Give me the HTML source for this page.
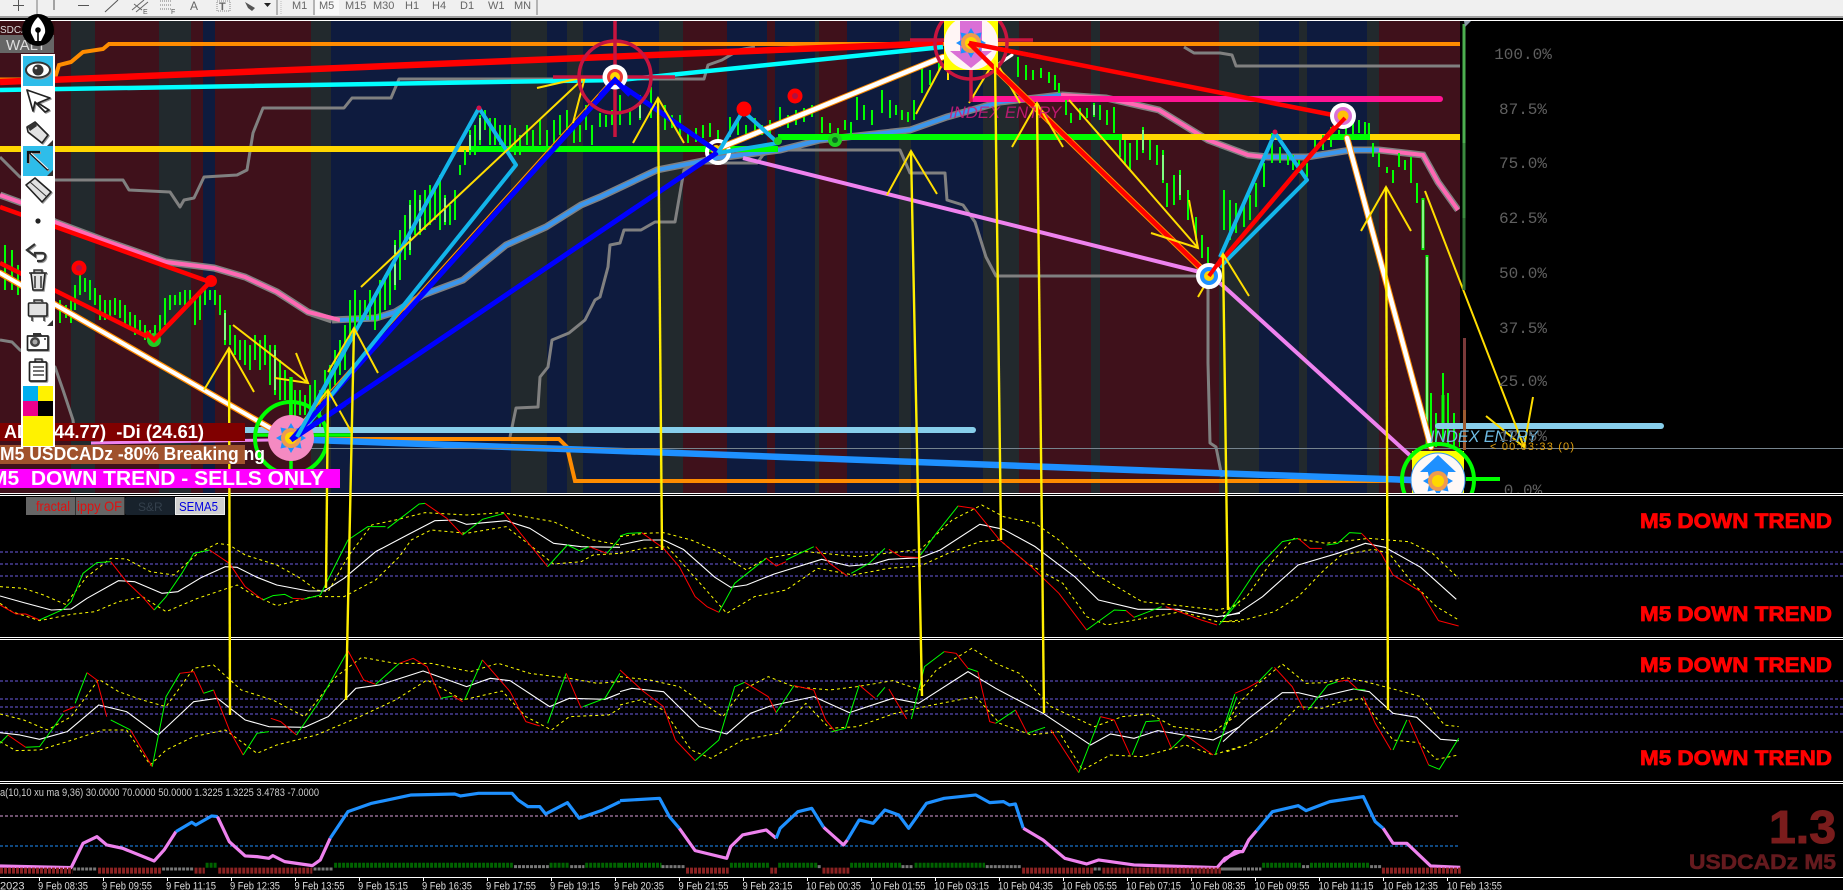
<!DOCTYPE html>
<html><head><meta charset="utf-8"><title>USDCADz M5</title>
<style>
html,body{margin:0;padding:0;background:#000;width:1843px;height:890px;overflow:hidden}
svg{position:absolute;left:0;top:0;display:block}
text{font-family:"Liberation Sans",sans-serif}
.n{fill:none;vector-effect:non-scaling-stroke;stroke-linejoin:round}
.r{stroke:#f00;stroke-width:1}.g{stroke:#0f0;stroke-width:1}.w{stroke:#fff;stroke-width:1.1}
.y{stroke:#ff0;stroke-width:1;stroke-dasharray:3 3}
.pk{stroke:#ee82ee;stroke-width:3.2}.bl{stroke:#1e90ff;stroke-width:3.2}
.hr{stroke:#8b2222;stroke-width:6;stroke-dasharray:3 1}
.hg{stroke:#777;stroke-width:3;stroke-dasharray:3 1}
.hn{stroke:#006400;stroke-width:5;stroke-dasharray:3 1}
.ar{fill:none;stroke:#ffdd00;stroke-width:2}
.ln{fill:none;stroke:#ffee00;stroke-width:2.4}
.tf{font-size:11px;fill:#666}
.tm{font-size:11px;fill:#ddd}
.pc{font-family:"Liberation Mono",monospace;font-size:16px;fill:#606060;text-anchor:middle}
.dt{font-size:21px;font-weight:bold;fill:#f00;stroke:#f00;stroke-width:.8}
.ic{fill:#fff;stroke:#222;stroke-width:1.7;stroke-linejoin:round}
.ig{fill:#e2e2e2;stroke:#222;stroke-width:1.6;stroke-linejoin:round}
.sh{filter:drop-shadow(1px 1px 0 #999)}
</style></head><body>
<svg width="1843" height="890" viewBox="0 0 1843 890" xmlns="http://www.w3.org/2000/svg">
<defs>
<clipPath id="mc"><rect x="0" y="21" width="1843" height="472"/></clipPath>
<clipPath id="mc2"><rect x="0" y="21" width="1460" height="472"/></clipPath>
<g id="sun">
<polygon points="0,-15 3.5,-9 10.5,-10.5 9,-3.5 15,0 9,3.5 10.5,10.5 3.5,9 0,15 -3.5,9 -10.5,10.5 -9,3.5 -15,0 -9,-3.5 -10.5,-10.5 -3.5,-9" fill="#1e90ff"/>
<circle r="10" fill="#ef9a50"/><circle r="6" fill="#ffd700"/>
</g>
</defs>
<rect width="1843" height="890" fill="#000"/>

<!-- MAIN -->
<g clip-path="url(#mc)">
<g shape-rendering="crispEdges">
<rect x="0" y="21" width="1460" height="472" fill="#3f111b"/>
<g fill="#22292d">
<rect x="71" y="21" width="24" height="472"/><rect x="159" y="21" width="32" height="472"/><rect x="311" y="21" width="20" height="472"/><rect x="511" y="21" width="36" height="472"/><rect x="567" y="21" width="16" height="472"/><rect x="659" y="21" width="24" height="472"/><rect x="815" y="21" width="4" height="472"/><rect x="899" y="21" width="12" height="472"/><rect x="983" y="21" width="36" height="472"/><rect x="1091" y="21" width="9" height="472"/><rect x="1219" y="21" width="40" height="472"/><rect x="1299" y="21" width="8" height="472"/><rect x="1367" y="21" width="12" height="472"/>
</g>
<g fill="#0e1b3e">
<rect x="203" y="21" width="12" height="472"/><rect x="331" y="21" width="180" height="472"/><rect x="547" y="21" width="20" height="472"/><rect x="583" y="21" width="76" height="472"/><rect x="727" y="21" width="40" height="472"/><rect x="775" y="21" width="40" height="472"/><rect x="847" y="21" width="52" height="472"/><rect x="911" y="21" width="72" height="472"/><rect x="1259" y="21" width="40" height="472"/><rect x="1307" y="21" width="60" height="472"/>
</g>
</g>
<g clip-path="url(#mc2)">
<!-- gray stepped lines -->
<g fill="none" stroke="#808080" stroke-width="3" stroke-linejoin="round">
<polyline points="0,157 20,177 55,180 123,180 129,190 170,192 180,207 184,200 194,198 204,177 237,175 247,170 253,133 263,108 344,108 352,98 391,98 399,79 704,79 708,65 722,60 739,50 755,47"/>
<polyline points="0,340 12,342 20,350 55,367 63,390 73,420 75,437"/>
<polyline points="510,437 516,408 538,407 540,377 548,367 552,340 569,333 585,320 595,300 600,297 608,267 610,245 620,243 624,230 641,230 655,222 675,222 684,170 700,163 757,163 763,155 775,150 900,150 910,173 945,173 947,200 963,205 975,222 986,257 996,276 1198,276 1208,287 1208,363 1210,443 1216,447 1222,477"/>
<polyline points="1184,47 1194,53 1220,53 1232,55 1236,66 1460,66"/>
</g>
<!-- orange -->
<polyline points="55,78 59,65 71,62 83,52 103,49 109,44 1460,44" fill="none" stroke="#ff8c00" stroke-width="4"/>
<line x1="0" y1="79" x2="56" y2="79" stroke="#ff8c00" stroke-width="3"/>
<polyline points="316,439 559,439 567,447 575,481 1387,481" fill="none" stroke="#ff8c00" stroke-width="4"/>
<!-- MA thick -->
<polyline points="0,195 22,203 55,222 103,240 166,262 214,268 245,277 277,292 308,312 332,320" fill="none" stroke="#808080" stroke-width="7"/>
<polyline points="332,320 376,318 395,312 423,295 463,280 506,245 546,227 581,205 600,197 657,170 718,158 780,150 820,140 910,130 947,117 1000,102 1061,95" fill="none" stroke="#808080" stroke-width="7"/>
<polyline points="1061,95 1106,98 1159,110 1208,140 1248,155 1268,157 1307,157 1351,150 1379,150 1423,155 1438,182 1458,210" fill="none" stroke="#808080" stroke-width="7"/>
<polyline points="0,195 22,203 55,222 103,240 166,262 214,268 245,277 277,292 308,312 340,320" fill="none" stroke="#ff69b4" stroke-width="4"/>
<polyline points="340,320 376,318 395,312 423,295 463,280 506,245 546,227 581,205 600,197 657,170 718,158 780,150 820,140 910,130 947,117 1000,102 1061,95" fill="none" stroke="#3a96ee" stroke-width="4"/>
<polyline points="1061,95 1106,98 1159,110 1208,140 1248,155 1265,157" fill="none" stroke="#ff69b4" stroke-width="4"/>
<polyline points="1265,157 1307,157 1351,150 1379,150" fill="none" stroke="#3a96ee" stroke-width="4"/>
<polyline points="1379,150 1423,155 1438,182 1458,210" fill="none" stroke="#ff69b4" stroke-width="4"/>
<!-- horizontal levels -->
<line x1="0" y1="149" x2="470" y2="149" stroke="#ffd700" stroke-width="6"/>
<line x1="470" y1="149" x2="778" y2="149" stroke="#0f0" stroke-width="6"/>
<line x1="778" y1="137" x2="1122" y2="137" stroke="#0f0" stroke-width="6"/>
<line x1="1122" y1="137" x2="1462" y2="137" stroke="#ffd700" stroke-width="6"/>
<line x1="1332" y1="137" x2="1370" y2="137" stroke="#0f0" stroke-width="6"/>
<line x1="973" y1="99" x2="1440" y2="99" stroke="#ff1493" stroke-width="6" stroke-linecap="round"/>
<!-- candles -->
<path fill="none" stroke="#00ff00" stroke-width="2" d="M5 245V290M12 250V290M18 265V295M60 300V323M66 305V318M71 300V323M75 285V310M80 275V295M85 278V292M90 280V300M95 288V305M100 295V320M105 300V320M110 300V318M115 298V315M120 300V318M125 305V325M130 312V330M135 315V335M140 320V335M145 325V340M150 330V340M155 325V345M160 315V335M165 298V325M170 295V310M175 295V305M180 292V305M185 290V305M190 290V302M195 295V325M200 290V320M205 288V305M210 290V300M215 290V305M220 295V315M225 310V345M230 325V345M235 335V355M240 340V360M245 340V365M250 345V370M255 335V360M260 340V370M265 335V365M270 345V385M275 345V395M280 360V400M285 370V400M290 380V420M295 390V420M300 390V415M305 395V415M310 385V415M315 380V410M320 390V430M325 370V400M330 365V390M335 350V385M340 340V375M345 325V370M350 300V340M355 290V330M360 300V325M365 300V320M370 290V320M375 295V330M380 280V320M385 275V310M390 270V305M395 240V290M400 230V280M405 215V260M410 200V255M415 190V235M420 195V235M425 190V230M430 185V225M435 190V220M440 175V230M445 195V225M450 205V225M455 190V220M460 165V175M465 150V165M470 130V155M475 125V155M480 115V145M485 110V130M490 118V145M495 118V145M500 125V145M505 125V150M510 125V150M515 128V155M520 135V155M527 125V145M533 130V150M540 120V145M547 130V148M554 120V143M560 115V135M567 110V130M574 125V143M580 125V142M586 105V130M592 125V145M600 113V127M606 115V127M612 110V125M620 95V125M630 108V125M640 95V120M651 87V118M658 100V125M665 105V130M672 115V128M680 115V135M688 133V143M696 128V142M703 125V138M710 123V137M718 130V140M730 117V137M738 120V135M746 125V135M755 118V137M762 125V135M770 120V135M780 107V127M788 115V128M796 110V125M804 108V122M812 105V117M822 117V133M830 123V133M838 128V138M845 120V130M851 122V135M857 97V120M864 105V120M872 110V125M882 90V113M890 100V118M896 105V115M902 110V120M908 112V122M914 100V120M922 67V93M930 70V85M939 63V70M1018 57V77M1026 65V80M1033 70V80M1041 68V78M1049 72V83M1055 75V90M1059 83V93M1066 100V115M1071 113V123M1080 108V120M1087 108V118M1094 103V117M1100 105V120M1107 110V125M1114 107V133M1120 137V157M1125 140V165M1130 143V170M1137 140V160M1143 127V153M1150 140V160M1157 145V165M1163 150V183M1167 183V207M1174 175V205M1180 170V200M1188 190V220M1196 217V240M1202 235V258M1208 247V263M1224 190V230M1230 200V240M1236 203V233M1244 200V227M1250 195V220M1256 183V207M1264 163V187M1272 133V163M1280 147V163M1288 150V165M1293 155V170M1299 160V173M1307 163V177M1315 140V153M1323 135V150M1331 127V147M1339 130V140M1346 128V142M1353 122V135M1359 120V133M1365 122V135M1369 123V140M1373 143V157M1379 153V167M1387 167V173M1393 170V183M1399 153V167M1405 160V170M1411 157V183M1417 183V203M1423 198V250M1431 393V443M1436 413V447M1443 373V440M1448 393V447M1454 413V447M1460 433V447"/>
<path fill="none" stroke="#00ff00" stroke-width="3" d="M1427 255V447M1423 198V250M1443 395V425"/>
<path fill="none" stroke="#fff" stroke-width="1" d="M1427 257V445M1423 200V248M1163 155V180M1180 175V195M1143 130V150M1094 105V115M640 98V118M480 118V140M445 198V222M470 135V150M225 313V340M275 350V390M290 385V410M410 205V250M420 200V230M395 245V285"/>
</g>
<!-- bottom level lines -->
<line x1="245" y1="430" x2="973" y2="430" stroke="#87ceeb" stroke-width="6" stroke-linecap="round"/>
<line x1="1438" y1="426" x2="1661" y2="426" stroke="#87ceeb" stroke-width="6" stroke-linecap="round"/>
<polyline points="312,440 620,451 1240,474 1411,480" fill="none" stroke="#1e90ff" stroke-width="6.5"/>
<line x1="300" y1="448.5" x2="1843" y2="448.5" stroke="#76848e" stroke-width="1"/>
<polyline points="91,443 269,440" fill="none" stroke="#ee82ee" stroke-width="3"/>
<!-- trend lines top -->
<line x1="0" y1="82" x2="943" y2="43" stroke="#f00" stroke-width="6.5"/>
<polyline points="0,90 620,80 943,47" fill="none" stroke="#0ff" stroke-width="4.5"/>
<!-- violet -->
<polyline points="743,158 1204,273" fill="none" stroke="#ee82ee" stroke-width="4"/>
<polyline points="1220,283 1415,460" fill="none" stroke="#ee82ee" stroke-width="4"/>
<!-- ring behind -->
<circle cx="718" cy="152" r="11" fill="none" stroke="#fff" stroke-width="4"/>
<circle cx="716" cy="150" r="5" fill="#ffd700"/>
<!-- white/orange lines -->
<g fill="none" stroke-linecap="round">
<line x1="0" y1="273" x2="277" y2="432" stroke="#ff8c00" stroke-width="6.5"/><line x1="0" y1="273" x2="277" y2="432" stroke="#fff" stroke-width="4"/>
<line x1="722" y1="147" x2="943" y2="57" stroke="#ff8c00" stroke-width="6.5"/><line x1="722" y1="147" x2="943" y2="57" stroke="#fff" stroke-width="4.5"/>
<line x1="1347" y1="138" x2="1431" y2="447" stroke="#ff8c00" stroke-width="6.5"/><line x1="1347" y1="138" x2="1431" y2="447" stroke="#fff" stroke-width="4.5"/>
<line x1="1000" y1="63" x2="1012" y2="55" stroke="#fff" stroke-width="3"/>
</g>
<!-- blue triangle -->
<line x1="287" y1="439" x2="611" y2="80" stroke="#ff8c00" stroke-width="1.2"/>
<polyline points="291,440 615,81 718,152 291,440" fill="none" stroke="#0000ff" stroke-width="5" stroke-linejoin="round"/>
<!-- sky triangles -->
<g fill="none" stroke="#13b5ea" stroke-width="4" stroke-linejoin="round">
<polyline points="297,437 479,108 516,165 297,438"/>
<polyline points="718,153 743,111 778,143 718,153"/>
<polyline points="1220,257 1275,133 1307,180 1220,267"/>
</g>
<!-- red swings -->
<g fill="none" stroke="#f00" stroke-linejoin="round">
<polyline points="0,207 210,282" stroke-width="4.5"/>
<polyline points="0,263 154,340 210,282" stroke-width="4.5"/>
<line x1="969" y1="43" x2="1210" y2="277" stroke="#ff8c00" stroke-width="6.5"/>
<polyline points="969,43 1210,277" stroke-width="4.5"/>
<polyline points="969,43 1343,117 1212,272" stroke-width="4.5"/>
</g>
<!-- dots -->
<circle cx="211" cy="281" r="6" fill="#f00"/>
<circle cx="154" cy="340" r="7" fill="#22cc22"/>
<polyline points="146,332 154,340 210,282" fill="none" stroke="#f00" stroke-width="4.5"/>
<circle cx="79" cy="268" r="7.5" fill="#f00"/><circle cx="79" cy="268" r="3" fill="#b01040"/>
<circle cx="744" cy="109" r="7.5" fill="#f00"/>
<circle cx="795" cy="96" r="7.5" fill="#f00"/><circle cx="795" cy="96" r="3" fill="#b01040"/>
<circle cx="835" cy="140" r="7" fill="#1fcf1f"/><circle cx="835" cy="140" r="3" fill="#0a6b20"/>
<circle cx="778" cy="141" r="4" fill="#1fcf1f"/>
<circle cx="479" cy="108" r="2.5" fill="#d0104a"/>
<circle cx="1275" cy="132" r="2.5" fill="#d0104a"/>
<!-- arrows -->
<g class="ar">
<path class="ar" d="M361 287L585 77M537 88L585 77L573 123"/>
<path class="ar" d="M233 325L308 383M275 378L308 383L296 353"/>
<path class="ar" d="M1069 100L1198 248M1151 233L1198 248L1189 200"/>
<path class="ar" d="M1425 191L1524 447M1486 416L1524 447L1533 397"/>
<path class="ar" d="M916 114L942 65M948 70V80"/>
<path class="ar" d="M204 390L229 348L254 392"/>
<path class="ar" d="M304 420L328 390L352 433"/>
<path class="ar" d="M328 372L354 328L378 373"/>
<path class="ar" d="M633 143L658 98L684 143"/>
<path class="ar" d="M887 195L911 151L937 194"/>
<path class="ar" d="M969 103L995 60L1020 103"/>
<path class="ar" d="M1012 147L1037 103L1063 147"/>
<path class="ar" d="M1198 297L1223 254L1249 296"/>
<path class="ar" d="M1361 231L1386 187L1411 231"/>
</g>
<!-- targets -->
<g fill="none" stroke="#c8143f" stroke-width="3.5">
<circle cx="615" cy="77" r="36"/>
<path d="M615 21V137M553 77H675"/>
<circle cx="971" cy="43" r="36"/>
<path d="M971 70V102M910 40H1033"/>
</g>
<circle cx="615" cy="77" r="12.5" fill="#fff"/><circle cx="615" cy="77" r="8" fill="#e53935"/><circle cx="615" cy="77" r="5" fill="#ffd700"/>
<polyline points="600,96 615,80 630,95" fill="none" stroke="#0000ff" stroke-width="5"/>
<!-- top big icon -->
<rect x="944" y="21" width="54" height="49" fill="#ffff00"/>
<ellipse cx="971" cy="43" rx="27" ry="27" fill="#fff5f5"/>
<path d="M960 21H982V51H992L971 68L950 51H960Z" fill="#da70d6"/>
<use href="#sun" x="971" y="43"/>
<polyline points="969,43 1030,103" fill="none" stroke="#f00" stroke-width="4.5"/>
<polyline points="969,43 1040,57" fill="none" stroke="#f00" stroke-width="4.5"/>
<!-- small rings -->
<circle cx="1209" cy="276" r="11" fill="#1e90ff" stroke="#fff" stroke-width="4"/>
<circle cx="1209" cy="276" r="5" fill="#ffd700"/>
<polyline points="1209,276 1222,258" fill="none" stroke="#f00" stroke-width="4"/>
<ellipse cx="1343" cy="116" rx="13" ry="13" fill="#fff"/><circle cx="1343" cy="116" r="9" fill="#da70d6"/><circle cx="1343" cy="116" r="5.5" fill="#ffc107"/>
<polyline points="1345,118 1310,155" fill="none" stroke="#f00" stroke-width="4"/>
<!-- bottom left -->
<path d="M291 377V490M255 435H352" fill="none" stroke="#0f0" stroke-width="3.5"/>
<circle cx="291" cy="438" r="36" fill="none" stroke="#0f0" stroke-width="4"/>
<circle cx="291" cy="438" r="23" fill="#f48ac2"/>
<use href="#sun" x="291" y="438"/>
<polyline points="291,440 330,397" fill="none" stroke="#0000ff" stroke-width="5"/>
<polyline points="291,440 345,404" fill="none" stroke="#0000ff" stroke-width="5"/>
<polyline points="297,437 350,340" fill="none" stroke="#13b5ea" stroke-width="4"/>
<!-- bottom right -->
<rect x="1412" y="451" width="52" height="42" fill="#ffff00"/>
<circle cx="1438" cy="480" r="36" fill="none" stroke="#0f0" stroke-width="4"/>
<line x1="1466" y1="479" x2="1500" y2="479" stroke="#0f0" stroke-width="4"/>
<circle cx="1438" cy="480" r="27" fill="#fff8f6" stroke="#3a96ee" stroke-width="1"/>
<path d="M1438 455L1456 472H1446V478H1430V472H1420Z" fill="#1e90ff"/>
<use href="#sun" x="1438" y="481"/>
<!-- side bar -->
<rect x="1462.5" y="24" width="3" height="119" fill="#4caf50"/>
<rect x="1462.5" y="143" width="3" height="75" fill="#3b8a3f"/>
<rect x="1462.5" y="218" width="3" height="72" fill="#2f6e33"/>
<rect x="1463" y="338" width="3" height="72" fill="#7a3a3a"/>
<rect x="1463" y="410" width="3" height="40" fill="#9c5a30"/>
<polygon points="1464,21 1471,21 1465,27" fill="#8a98a5"/>
<!-- labels -->
<text x="949" y="118" font-size="17" font-style="italic" fill="#d21a7c" fill-opacity=".85" textLength="112" lengthAdjust="spacingAndGlyphs">INDEX ENTRY</text>
<text x="1430" y="442" font-size="17" font-style="italic" fill="#6fbde6" textLength="108" lengthAdjust="spacingAndGlyphs">INDEX ENTRY</text>
<text x="1490" y="450" font-size="11" fill="#e0a010" textLength="84">&lt; 00:03:33 (0)</text>
</g>
<!-- price scale -->
<text class="pc" x="1523" y="59">100.0%</text>
<text class="pc" x="1523" y="114">87.5%</text>
<text class="pc" x="1523" y="168">75.0%</text>
<text class="pc" x="1523" y="223">62.5%</text>
<text class="pc" x="1523" y="278">50.0%</text>
<text class="pc" x="1523" y="333">37.5%</text>
<text class="pc" x="1523" y="386">25.0%</text>
<text class="pc" x="1523" y="441">12.5%</text>
<text class="pc" x="1523" y="495" clip-path="url(#mc)">0.0%</text>

<!-- separators -->
<g fill="#fff">
<rect x="0" y="493" width="1843" height="1"/><rect x="0" y="495" width="1843" height="1"/>
<rect x="0" y="637" width="1843" height="1"/><rect x="0" y="639" width="1843" height="1"/>
<rect x="0" y="781" width="1843" height="1"/><rect x="0" y="783" width="1843" height="1"/>
<rect x="0" y="877" width="1843" height="1"/>
</g>
<!-- dashed levels -->
<g stroke="#6d5de0" stroke-width="1" stroke-dasharray="3 2">
<line x1="0" x2="1843" y1="552" y2="552"/><line x1="0" x2="1843" y1="564" y2="564"/><line x1="0" x2="1843" y1="576" y2="576"/>
<line x1="0" x2="1843" y1="681" y2="681"/><line x1="0" x2="1843" y1="699" y2="699"/><line x1="0" x2="1843" y1="707" y2="707"/><line x1="0" x2="1843" y1="714" y2="714"/><line x1="0" x2="1843" y1="732" y2="732"/>
</g>
<line x1="0" x2="1460" y1="816" y2="816" stroke="#dda0dd" stroke-dasharray="3 2"/>
<line x1="0" x2="1460" y1="846" y2="846" stroke="#1e90ff" stroke-dasharray="3 2"/>

<!-- indicators Z4 -->
<g transform="translate(0,490) scale(.3954 .3333)">
<polyline class="n y" points="0,290 60,295 110,315 165,343 220,260 280,205 320,207 380,245 440,255 500,190 550,160 580,165 620,195 700,225 760,265 800,300 830,305 880,200 940,105 1000,90 1075,68 1180,75 1270,68 1400,95 1500,150 1568,165"/>
<polyline class="n y" points="0,340 30,365 100,392 180,373 240,365 300,335 360,320 420,365 500,325 600,285 640,315 700,347 790,320 870,320 950,270 1010,200 1040,150 1090,120 1180,130 1280,110 1340,165 1400,222 1470,215 1500,195 1568,190"/>
<polyline class="n w" points="0,318 60,338 130,360 180,357 220,325 300,272 340,275 410,310 450,305 510,262 570,230 600,232 650,262 700,285 780,303 820,303 870,265 950,185 1030,135 1100,92 1150,90 1180,103 1280,92 1340,115 1400,160 1470,170 1568,172"/>
<polyline class="n r" points="0,345 40,372 65,372 100,390"/><polyline class="n g" points="100,390 160,358 180,335 210,250 245,218 280,215"/><polyline class="n r" points="280,215 320,275 360,320 390,360"/><polyline class="n g" points="390,360 420,320 460,250 490,190 530,180"/><polyline class="n r" points="530,180 580,220 620,290 665,330"/><polyline class="n g" points="665,330 690,317 720,313 740,325"/><polyline class="n r" points="740,325 770,327"/><polyline class="n g" points="770,327 810,315 880,150 930,110 975,110"/><polyline class="n g" points="980,115 1060,42 1075,40"/><polyline class="n r" points="1075,40 1130,85 1170,135"/><polyline class="n g" points="1170,135 1220,88 1275,70"/><polyline class="n r" points="1275,70 1330,150 1385,230"/><polyline class="n g" points="1385,230 1435,165 1465,182 1490,170"/><polyline class="n r" points="1490,170 1535,190"/><polyline class="n g" points="1535,190 1568,145"/>
<polyline class="n y" points="0,672 60,690 120,720 180,680 250,568 300,605 360,630 420,650 490,535 540,525 610,600 690,630 770,680 850,560 915,502 1000,520 1090,520 1190,545 1260,520 1340,550 1440,565 1510,580 1568,575"/>
<polyline class="n y" points="0,755 40,782 100,780 170,755 260,720 320,720 380,825 420,780 490,740 570,720 650,790 700,765 800,735 910,680 1000,630 1080,570 1170,630 1270,603 1330,680 1395,720 1440,680 1540,675 1568,655"/>
<polyline class="n w" points="0,728 50,735 100,748 170,725 250,645 320,665 400,735 490,635 550,625 620,690 680,710 770,712 830,680 900,595 960,585 1070,543 1180,590 1240,565 1290,572 1390,650 1440,625 1530,628 1568,610"/>
<polyline class="n g" points="0,760 20,735"/><polyline class="n r" points="20,735 65,772"/><polyline class="n g" points="65,772 100,770 160,672"/><polyline class="n r" points="160,665 190,650"/><polyline class="n g" points="190,640 220,548"/><polyline class="n r" points="220,548 245,570 270,680"/><polyline class="n g" points="280,690 330,720"/><polyline class="n r" points="330,720 385,830"/><polyline class="n g" points="385,830 420,620 455,550"/><polyline class="n r" points="455,550 490,545 515,610"/><polyline class="n g" points="515,610 540,600"/><polyline class="n r" points="540,600 580,720 615,795"/><polyline class="n g" points="615,795 650,730 680,725"/><polyline class="n r" points="685,685 710,695 750,735"/><polyline class="n g" points="750,735 810,630 880,482"/><polyline class="n r" points="880,482 920,570 950,583"/><polyline class="n g" points="950,583 1010,520"/><polyline class="n r" points="1010,520 1045,505 1080,530 1115,625"/><polyline class="n g" points="1115,625 1145,618"/><polyline class="n r" points="1145,618 1170,635"/><polyline class="n g" points="1175,630 1220,510"/><polyline class="n r" points="1220,510 1290,605 1330,695 1365,708"/><polyline class="n g" points="1385,700 1432,550"/><polyline class="n r" points="1432,550 1470,655"/><polyline class="n g" points="1475,650 1530,625 1568,550"/>
<polyline class="n pk" points="0,1128 180,1133 210,1060 245,1040 270,1065 310,1075 390,1113 415,1080 445,1025"/><polyline class="n bl" points="445,1025 485,997 495,1005 535,978 550,980"/><polyline class="n pk" points="550,980 580,1055 620,1098 650,1100 680,1105 690,1097 720,1115 790,1127 810,1110 835,1045"/><polyline class="n bl" points="835,1045 880,965 940,940 1040,915 1150,912 1165,918 1210,910 1295,910 1310,930 1335,950 1365,950 1380,972 1435,938 1465,985 1525,960 1568,935"/>
<path class="n hr" d="M0 1142H183M248 1142H408M492 1142H518M552 1142H790"/>
<path class="n hg" d="M185 1137H245M410 1137H490M793 1137H842M1300 1130H1388M1442 1130H1478"/>
<path class="n hn" d="M520 1126H550M845 1126H1297M1390 1126H1440M1480 1126H1568"/>
</g>
<!-- Z5 -->
<g transform="translate(620,490) scale(.3954 .3333)">
<polyline class="n y" points="0,140 60,130 110,128 180,150 240,180 320,240 370,205 470,185 600,200 760,178 840,90 915,45 970,80 1050,100 1110,150 1200,250 1320,335 1400,345 1510,360 1568,345"/>
<polyline class="n y" points="0,190 60,175 120,170 180,250 270,370 340,320 420,300 500,235 590,255 680,235 760,228 830,190 910,155 960,150 1030,220 1120,280 1180,380 1230,405 1350,380 1420,365 1510,395 1568,395"/>
<polyline class="n w" points="0,165 60,150 110,150 160,178 240,262 280,292 320,285 390,252 510,208 580,228 640,222 680,208 760,203 810,180 910,103 970,118 1050,170 1150,260 1210,330 1310,358 1410,358 1510,380 1568,370"/>
<polyline class="n g" points="0,138 20,130 55,128"/><polyline class="n r" points="55,128 110,175 150,230 190,320 220,350 250,367"/><polyline class="n g" points="250,367 290,280 370,205"/><polyline class="n r" points="370,205 395,228 420,215"/><polyline class="n g" points="420,210 490,170"/><polyline class="n r" points="495,170 530,220 575,258"/><polyline class="n g" points="585,250 630,220 670,175"/><polyline class="n r" points="680,178 710,200 760,203"/><polyline class="n g" points="760,195 800,130 855,48"/><polyline class="n r" points="855,48 895,55 960,150 1040,230 1110,310 1180,420"/><polyline class="n g" points="1180,420 1250,360 1280,362"/><polyline class="n r" points="1280,362 1300,382"/><polyline class="n g" points="1300,382 1370,350"/><polyline class="n r" points="1380,350 1470,390 1510,405"/><polyline class="n g" points="1515,405 1568,330"/>
<polyline class="n y" points="0,560 75,570 150,590 210,640 260,680 310,600 375,560 440,590 530,600 600,590 690,572 760,600 800,540 890,475 950,520 1010,550 1090,650 1200,710 1270,680 1340,672 1400,710 1500,725 1568,670"/>
<polyline class="n y" points="0,645 50,630 110,660 180,780 230,805 310,750 400,730 470,640 530,715 600,710 690,672 790,645 900,620 960,700 1040,735 1110,725 1170,840 1240,795 1320,800 1430,765 1500,795 1568,770"/>
<polyline class="n w" points="0,605 30,595 110,605 200,710 270,732 330,670 380,648 490,620 580,668 690,625 755,640 880,545 950,595 1070,670 1190,765 1240,732 1300,745 1360,722 1500,750 1568,710"/>
<polyline class="n r" points="0,540 60,605 110,650 140,750 190,812"/><polyline class="n g" points="190,812 250,750 290,590 315,577"/><polyline class="n r" points="315,577 375,620 395,668"/><polyline class="n g" points="395,668 440,587"/><polyline class="n r" points="440,587 490,600 520,690 545,725"/><polyline class="n g" points="535,725 570,715 605,585"/><polyline class="n r" points="605,585 645,625"/><polyline class="n g" points="650,620 670,592"/><polyline class="n r" points="680,597 725,687"/><polyline class="n g" points="737,687 770,530 820,485"/><polyline class="n r" points="820,485 850,490 880,535"/><polyline class="n g" points="880,535 905,545"/><polyline class="n r" points="905,545 935,695 950,700"/><polyline class="n g" points="950,700 1000,660"/><polyline class="n r" points="1000,660 1030,730"/><polyline class="n g" points="1030,730 1075,712"/><polyline class="n r" points="1090,720 1160,848"/><polyline class="n g" points="1160,848 1215,680"/><polyline class="n r" points="1215,680 1250,690 1290,795"/><polyline class="n g" points="1295,795 1330,695 1365,692"/><polyline class="n r" points="1365,692 1395,775"/><polyline class="n g" points="1395,775 1430,735"/><polyline class="n r" points="1430,735 1500,795"/><polyline class="n g" points="1505,795 1560,620"/>
<polyline class="n bl" points="0,932 100,925 125,980 150,1015"/><polyline class="n pk" points="150,1015 190,1082 270,1105 280,1070 310,1035 370,1020 395,1045"/><polyline class="n bl" points="395,1045 405,1015 450,965 485,955 515,1012"/><polyline class="n pk" points="515,1012 565,1065 575,1050"/><polyline class="n bl" points="575,1050 605,990 640,1000 670,960 705,975 730,1015 775,940 820,925 900,915 935,938 970,935 985,945 1000,942 1020,1015"/><polyline class="n pk" points="1020,1015 1070,1050 1125,1105 1180,1122 1210,1110 1300,1125 1510,1133 1530,1105 1568,1085"/>
<path class="n hr" d="M167 1142H275M380 1142H397M512 1142H580M1017 1142H1197M1220 1142H1520"/>
<path class="n hg" d="M105 1130H165M500 1130H510M712 1130H742M925 1130H1015M1198 1137H1218M1520 1137H1568"/>
<path class="n hn" d="M0 1126H105M278 1126H378M400 1126H500M582 1126H712M745 1126H923"/>
</g>
<!-- Z6 -->
<g transform="translate(1223,490) scale(.3954 .3333)">
<polyline class="n y" points="0,370 60,320 120,220 180,145 260,160 370,145 470,155 530,190 596,265"/>
<polyline class="n y" points="0,395 60,388 130,365 190,320 260,235 300,195 380,178 420,190 480,280 540,350 596,390"/>
<polyline class="n w" points="0,380 40,368 100,320 190,225 290,190 360,160 410,172 500,232 590,328"/>
<polyline class="n g" points="0,390 40,320 90,230 150,155 190,145"/><polyline class="n r" points="190,145 220,175 250,175"/><polyline class="n g" points="262,165 290,160 320,128 350,130"/><polyline class="n r" points="350,130 400,190 430,255 500,305 545,392 596,408"/>
<polyline class="n y" points="0,720 40,640 90,580 150,522 210,580 260,578 310,563 360,575 440,600 500,620 560,705 596,710"/>
<polyline class="n y" points="10,785 60,765 130,720 190,650 250,655 300,635 350,625 430,750 495,758 540,808 596,795"/>
<polyline class="n w" points="0,755 60,690 150,608 190,608 240,622 330,597 370,605 430,670 490,682 550,748 596,752"/>
<polyline class="n g" points="0,720 30,612"/><polyline class="n r" points="30,610 60,595 90,575"/><polyline class="n g" points="90,575 125,532"/><polyline class="n r" points="130,532 175,590 205,660"/><polyline class="n g" points="215,660 265,585 290,575"/><polyline class="n r" points="290,575 315,570 340,597"/><polyline class="n g" points="330,597 360,600"/><polyline class="n r" points="355,620 385,700 425,780"/><polyline class="n g" points="430,780 465,690"/><polyline class="n r" points="470,690 500,770 520,825"/><polyline class="n g" points="520,825 547,838 596,745"/>
<polyline class="n pk" points="0,1115 30,1085 50,1085 65,1050 85,1022"/><polyline class="n bl" points="85,1022 125,965 190,947 210,962 270,935 355,920 385,995 405,1015"/><polyline class="n pk" points="405,1015 430,1060 465,1060 525,1128 600,1132"/>
<path class="n hr" d="M402 1142H602"/>
<path class="n hg" d="M0 1137H97M200 1130H218M372 1130H400"/>
<path class="n hn" d="M99 1126H197M220 1126H370"/>
</g>

<!-- long yellow verticals -->
<g class="ln">
<line class="ln" x1="229" y1="348" x2="230" y2="715"/>
<line class="ln" x1="328" y1="390" x2="326" y2="588"/>
<line class="ln" x1="354" y1="328" x2="346" y2="700"/>
<line class="ln" x1="658" y1="98" x2="662" y2="550"/>
<line class="ln" x1="911" y1="151" x2="922" y2="696"/>
<line class="ln" x1="995" y1="60" x2="1001" y2="540"/>
<line class="ln" x1="1037" y1="103" x2="1044" y2="713"/>
<line class="ln" x1="1223" y1="254" x2="1228" y2="610"/>
<line class="ln" x1="1386" y1="187" x2="1388" y2="710"/>
</g>

<!-- banners -->
<rect x="0" y="423" width="245" height="18" fill="#800000"/>
<text x="4" y="438" font-size="18" font-weight="bold" fill="#fff">AD</text>
<text x="54" y="438" font-size="18" font-weight="bold" fill="#fff" textLength="150" lengthAdjust="spacingAndGlyphs" xml:space="preserve">44.77)  -Di (24.61)</text>
<rect x="0" y="445" width="245" height="19" fill="#a0522d"/>
<text x="0" y="460" font-size="18" font-weight="bold" fill="#fff" textLength="265" lengthAdjust="spacingAndGlyphs">M5 USDCADz -80% Breaking ng</text>
<rect x="0" y="469" width="340" height="19" fill="#ff00ff"/>
<text x="-10" y="485" font-size="20" font-weight="bold" fill="#fff" textLength="334" lengthAdjust="spacingAndGlyphs" xml:space="preserve">M5  DOWN TREND - SELLS ONLY</text>

<!-- panel buttons -->
<rect x="26" y="497" width="49" height="18" fill="#666"/><text x="36" y="511" font-size="14" fill="#e01010" textLength="34" lengthAdjust="spacingAndGlyphs">fractal</text>
<rect x="75.5" y="497" width="49" height="18" fill="#666"/><text x="77" y="511" font-size="14" fill="#e01010" textLength="45" lengthAdjust="spacingAndGlyphs">ippy OF</text>
<rect x="125" y="497" width="50" height="18" rx="2" fill="#18222c"/><text x="138" y="511" font-size="12" fill="#34404c">S&amp;R</text>
<rect x="175.5" y="497.5" width="49" height="17" fill="#d0d0d0" stroke="#eee"/><text x="179" y="511" font-size="13" fill="#0000e0" textLength="39" lengthAdjust="spacingAndGlyphs">SEMA5</text>

<!-- right labels -->
<text class="dt" x="1640" y="528" textLength="192" lengthAdjust="spacingAndGlyphs">M5 DOWN TREND</text>
<text class="dt" x="1640" y="621" textLength="192" lengthAdjust="spacingAndGlyphs">M5 DOWN TREND</text>
<text class="dt" x="1640" y="672" textLength="192" lengthAdjust="spacingAndGlyphs">M5 DOWN TREND</text>
<text class="dt" x="1640" y="765" textLength="192" lengthAdjust="spacingAndGlyphs">M5 DOWN TREND</text>
<text x="1769" y="843" font-size="46" font-weight="bold" fill="#7a1c1c" stroke="#7a1c1c" stroke-width="1" textLength="67" lengthAdjust="spacingAndGlyphs">1.3</text>
<text x="1689" y="869" font-size="21" font-weight="bold" fill="#651a1e" stroke="#651a1e" stroke-width=".6" textLength="147" lengthAdjust="spacingAndGlyphs">USDCADz M5</text>
<text x="0" y="796" font-size="11" fill="#ccc" textLength="319" lengthAdjust="spacingAndGlyphs">a(10,10 xu ma 9,36) 30.0000 70.0000 50.0000 1.3225 1.3225 3.4783 -7.0000</text>

<!-- time axis -->
<path d="M39.5 877v4M103.5 877v4M167.5 877v4M231.5 877v4M295.5 877v4M359.5 877v4M423.5 877v4M487.5 877v4M551.5 877v4M615.5 877v4M679.5 877v4M743.5 877v4M807.5 877v4M871.5 877v4M935.5 877v4M999.5 877v4M1063.5 877v4M1127.5 877v4M1191.5 877v4M1255.5 877v4M1319.5 877v4M1383.5 877v4M1447.5 877v4" stroke="#fff"/>
<g class="tm">
<text class="tm" x="0" y="889.5">2023</text>
<text class="tm" x="38" y="889.5" textLength="50" lengthAdjust="spacingAndGlyphs">9 Feb 08:35</text>
<text class="tm" x="102" y="889.5" textLength="50" lengthAdjust="spacingAndGlyphs">9 Feb 09:55</text>
<text class="tm" x="166" y="889.5" textLength="50" lengthAdjust="spacingAndGlyphs">9 Feb 11:15</text>
<text class="tm" x="230" y="889.5" textLength="50" lengthAdjust="spacingAndGlyphs">9 Feb 12:35</text>
<text class="tm" x="294.5" y="889.5" textLength="50" lengthAdjust="spacingAndGlyphs">9 Feb 13:55</text>
<text class="tm" x="358" y="889.5" textLength="50" lengthAdjust="spacingAndGlyphs">9 Feb 15:15</text>
<text class="tm" x="422" y="889.5" textLength="50" lengthAdjust="spacingAndGlyphs">9 Feb 16:35</text>
<text class="tm" x="486" y="889.5" textLength="50" lengthAdjust="spacingAndGlyphs">9 Feb 17:55</text>
<text class="tm" x="550" y="889.5" textLength="50" lengthAdjust="spacingAndGlyphs">9 Feb 19:15</text>
<text class="tm" x="614" y="889.5" textLength="50" lengthAdjust="spacingAndGlyphs">9 Feb 20:35</text>
<text class="tm" x="678.5" y="889.5" textLength="50" lengthAdjust="spacingAndGlyphs">9 Feb 21:55</text>
<text class="tm" x="742.5" y="889.5" textLength="50" lengthAdjust="spacingAndGlyphs">9 Feb 23:15</text>
<text class="tm" x="806" y="889.5" textLength="55" lengthAdjust="spacingAndGlyphs">10 Feb 00:35</text>
<text class="tm" x="870.5" y="889.5" textLength="55" lengthAdjust="spacingAndGlyphs">10 Feb 01:55</text>
<text class="tm" x="934" y="889.5" textLength="55" lengthAdjust="spacingAndGlyphs">10 Feb 03:15</text>
<text class="tm" x="998" y="889.5" textLength="55" lengthAdjust="spacingAndGlyphs">10 Feb 04:35</text>
<text class="tm" x="1062" y="889.5" textLength="55" lengthAdjust="spacingAndGlyphs">10 Feb 05:55</text>
<text class="tm" x="1126" y="889.5" textLength="55" lengthAdjust="spacingAndGlyphs">10 Feb 07:15</text>
<text class="tm" x="1190.5" y="889.5" textLength="55" lengthAdjust="spacingAndGlyphs">10 Feb 08:35</text>
<text class="tm" x="1254.5" y="889.5" textLength="55" lengthAdjust="spacingAndGlyphs">10 Feb 09:55</text>
<text class="tm" x="1318.5" y="889.5" textLength="55" lengthAdjust="spacingAndGlyphs">10 Feb 11:15</text>
<text class="tm" x="1383" y="889.5" textLength="55" lengthAdjust="spacingAndGlyphs">10 Feb 12:35</text>
<text class="tm" x="1447" y="889.5" textLength="55" lengthAdjust="spacingAndGlyphs">10 Feb 13:55</text>
</g>

<!-- top toolbar -->
<rect x="0" y="0" width="1843" height="16" fill="#f0f0f0"/>
<rect x="0" y="16" width="1843" height="2" fill="#a0a0a0"/>
<rect x="0" y="18" width="1843" height="2" fill="#000"/>
<rect x="0" y="20" width="1843" height="1" fill="#fff"/>
<rect x="315" y="0" width="24" height="15" fill="#f8f8f8"/>
<g fill="none" stroke="#777" stroke-width="1">
<path d="M37 0V15M277 0V15M537 0V15M314 0V15"/>
<path d="M13 5.5H24M18.5 0V11" stroke="#555"/>
<path d="M54 0V10" stroke="#555"/>
<path d="M78 5.5H89" stroke="#555"/>
<path d="M105 12L118 0" stroke="#555"/>
<path d="M132 10L144 0M136 12L148 2M134 4L142 10" stroke="#666"/>
<path d="M160 1H172M160 5H172M160 9H172" stroke="#777" stroke-dasharray="1 1"/>
<path d="M217 1H230V11H217Z" stroke="#888" stroke-dasharray="1 1"/>
</g>
<text x="143" y="14" font-size="7" fill="#555">E</text><text x="171" y="14" font-size="7" fill="#555">F</text>
<text x="190" y="10" font-size="12" fill="#666">A</text><text x="219" y="10" font-size="11" font-weight="bold" fill="#666">T</text>
<path d="M245 2l5 3 5 3-3 3-4-3z" fill="#555"/><polygon points="264,3 271,3 267.5,7" fill="#222"/>
<path d="M281 1V15" stroke="#bbb" stroke-dasharray="1 1"/>
<text class="tf" x="292" y="9">M1</text><text class="tf" x="319" y="9">M5</text><text class="tf" x="345" y="9">M15</text><text class="tf" x="373" y="9">M30</text><text class="tf" x="405" y="9">H1</text><text class="tf" x="432" y="9">H4</text><text class="tf" x="460" y="9">D1</text><text class="tf" x="488" y="9">W1</text><text class="tf" x="514" y="9">MN</text>

<!-- top left box -->
<rect x="0" y="22" width="55" height="13" fill="#3a0f14"/>
<text x="0" y="33" font-size="10" fill="#ddd">SDCAD</text>
<rect x="0" y="35" width="54" height="18" fill="#666"/>
<text x="6" y="50" font-size="15" fill="#ddd">WALT</text>
<circle cx="38" cy="30" r="16" fill="#000"/>
<path d="M38 17C33 22 30 28 31 33L35 41H41L45 33C46 28 43 22 38 17Z" fill="#fff"/>
<circle cx="38" cy="30" r="2.8" fill="#000"/><line x1="38" y1="30" x2="38" y2="41" stroke="#000" stroke-width="1.6"/>

<!-- left tool strip -->
<rect x="21" y="54" width="34" height="393" fill="#fff"/>
<rect x="23" y="56" width="30" height="30" fill="#2ebdea"/>
<rect x="23" y="146" width="30" height="30" fill="#2ebdea"/>
<g class="sh">
<ellipse cx="38" cy="70" rx="12" ry="7.5" fill="#fff" stroke="#333" stroke-width="2"/><circle cx="38" cy="70" r="5.5" fill="#333"/><circle cx="36" cy="68" r="1.3" fill="#ddd"/>
<path class="ic" d="M27 90L50 98L38 103L49 110L45 112L35 102L33 111Z"/>
<path class="ig" d="M27 127L35 122L48 135L42 143L28 132Z"/><path d="M27 126L35 122L37 126L30 131Z" fill="#333"/>
<path d="M48 170L29 152M28 163V152H40" fill="none" stroke="#111" stroke-width="2.2"/><path d="M48 169L31 153" stroke="#fff" stroke-width=".9"/>
<path class="ig" d="M26 185L35 178L51 192L42 202Z"/><path d="M30 182L47 197" stroke="#333"/>
<path d="M35 244L27 250L35 256V253H42C47 253 46 260 41 261L37 261" fill="none" stroke="#333" stroke-width="2.2"/>
<path class="ig" d="M31 273H45L43 290H33Z"/><path d="M29 273H47M34 273V270H42V273M35 276V288M41 276V288" fill="none" stroke="#333" stroke-width="1.5"/>
<rect x="28.5" y="303" width="18.5" height="13" rx="1" class="ig"/><path d="M32 316V321M44 316V321M34 302V300H42V302" fill="none" stroke="#333" stroke-width="1.5"/>
<rect x="27.5" y="336" width="20.5" height="14" class="ic"/><circle cx="35" cy="342" r="5" fill="#444"/><circle cx="35" cy="342" r="2.5" fill="#aaa"/><rect x="33" y="333" width="8" height="3" fill="#333"/><circle cx="45" cy="339" r="1" fill="#333"/>
<rect x="29.5" y="362" width="17" height="19" rx="1" class="ic"/><path d="M35 362V359H42V362M33 367H44M33 371H44M33 375H44" fill="none" stroke="#222" stroke-width="1.3"/>
</g>
<polygon points="47,146 53,140 53,146" fill="#333"/>
<polygon points="47,176 53,170 53,176" fill="#333"/>
<polygon points="47,326 53,320 53,326" fill="#333"/>
<circle cx="38" cy="221" r="2.6" fill="#222"/>
<g shape-rendering="crispEdges">
<rect x="23" y="386" width="15" height="15" fill="#00aeef"/><rect x="38" y="386" width="15" height="15" fill="#fff200"/>
<rect x="23" y="401" width="15" height="15" fill="#ec008c"/><rect x="38" y="401" width="15" height="15" fill="#000"/>
<rect x="23" y="416" width="30" height="30" fill="#fff200"/>
</g>
</svg>
</body></html>
